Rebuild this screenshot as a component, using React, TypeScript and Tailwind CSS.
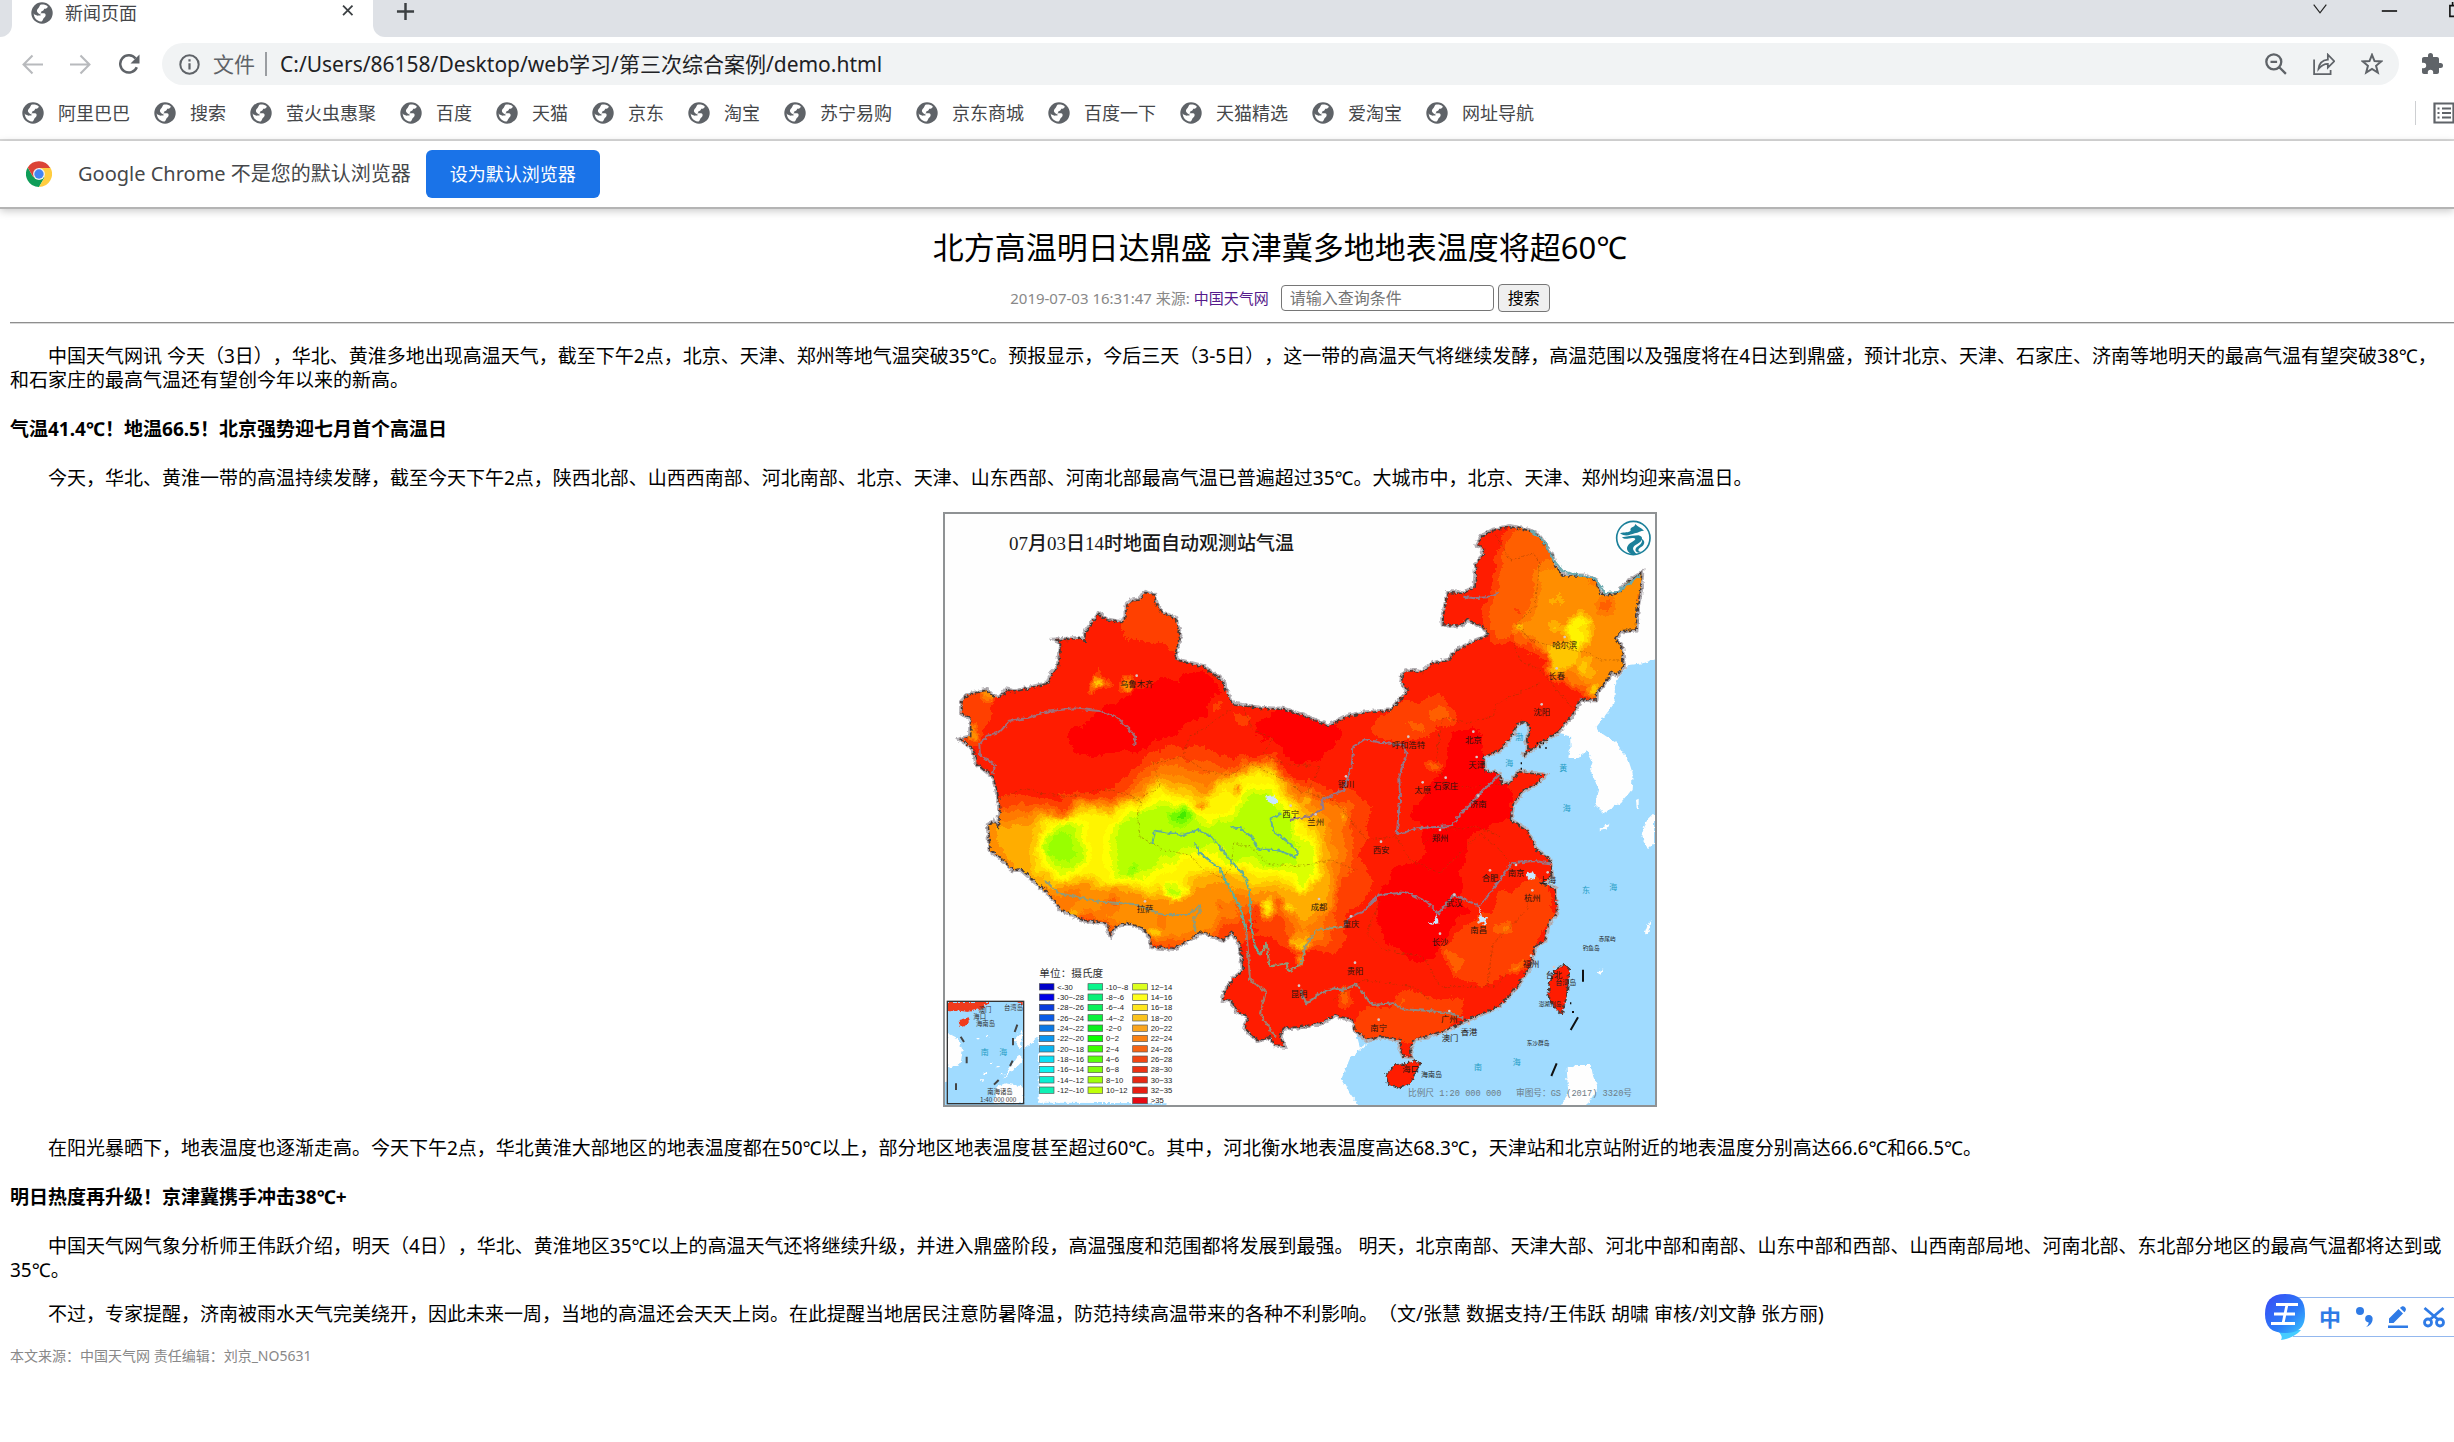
import React from "react";

const FONT =
  "font-['Noto_Sans','Noto_Sans_CJK_SC',sans-serif] [text-spacing-trim:space-all]";

/* ---------- small drawings ---------- */

function Globe() {
  return (
    <svg viewBox="0 0 22 22" className="size-[22px] shrink-0" aria-hidden="true">
      <circle cx="11" cy="11" r="10.7" fill="#5f6368" />
      <path
        fill="#fff"
        d="M9.4 2.8C12.2 2.2 14.8 2.8 16.8 4.4C16.6 6 15.2 6.8 13.2 6.8C12.8 8.2 12 9 10.4 9.200C10.400 10.400 10 11 8.800 11.200L13 11.200C14.400 11.400 14.800 12.400 14.600 13.600C14.200 15.400 12.600 16 12 17.400C11.600 18.600 11 19.400 9.800 19.500C5.600 18.900 2.600 15.400 2.700 11L7 13.400C8.400 13.900 9.600 13.500 9.800 12.700L7.600 11.400C5.600 10.200 5.400 8.200 6.800 6.800C8 5.800 8.400 4.200 9.400 2.800Z"
      />
      <path fill="#5f6368" d="M2.400 9.800C4.400 10 6 11.400 7.600 12.600L6.600 13.800L2.500 12Z" />
    </svg>
  );
}

function ChromeLogo() {
  return (
    <svg viewBox="0 0 48 48" className="size-[26px] shrink-0" aria-hidden="true">
      <path fill="#0f9d58" d="M24 24 13.6 30 3.2 12A24 24 0 0 0 24 48L34.4 30z" />
      <path fill="#ffcd40" d="M24 12H44.8A24 24 0 0 1 24 48L34.4 30z" />
      <path fill="#db4437" d="M24 13H44.8A24 24 0 0 0 3.2 12L13.6 30z" />
      <circle cx="24" cy="24" r="11" fill="#f1f1f1" />
      <circle cx="24" cy="24" r="8.6" fill="#4285f4" />
    </svg>
  );
}

function Stroke({ d, color = "#5f6368", w = 2, size = "size-[20px]" }: { d: string; color?: string; w?: number; size?: string }) {
  return (
    <svg viewBox="0 0 20 20" className={size + " shrink-0"} fill="none" stroke={color} strokeWidth={w} aria-hidden="true">
      <path d={d} />
    </svg>
  );
}

/* ---------- temperature map ---------- */

const pts = (dx: number, dy: number, s: string) =>
  s
    .trim()
    .split(/\s+/)
    .map((p) => {
      const [x, y] = p.split(",").map(Number);
      return `${x + dx},${y + dy}`;
    })
    .join(" ");
const nw = (s: string) => pts(0, 0, s);
const ne = (s: string) => pts(1110, 0, s);
const sw = (s: string) => pts(0, 900, s);
const se = (s: string) => pts(1110, 900, s);

const OUTLINE = [
  nw("205,890 190,830 140,790 135,765 128,745 92,718 122,710 122,655 95,640 95,605 115,585 170,570 190,590 215,590 230,570 255,575 355,550 365,520 385,500 392,430 378,420 450,415 465,425 465,400 505,342 525,358 575,368 588,350 588,318 605,303 630,300 645,278 672,285 680,315 695,338 735,355 750,405 735,465 740,480 820,500 880,545 890,580 908,612 990,625 1060,628 1100,640"),
  ne("30,655 85,678 140,650 185,640 270,632 300,600 325,572 305,545 308,520 330,512 365,518 400,490 450,480 465,455 520,425 568,405 550,380 500,358 485,375 430,375 428,355 445,278 490,280 525,262 530,190 550,165 550,145 532,133 545,110 580,90 630,80 690,92 720,110 755,165 765,200 790,228 850,228 885,240 900,280 920,288 955,280 985,245 1025,220 1022,270 1012,320 1008,390 965,392 945,415 965,440 970,500 950,525 935,515 915,550 890,575 888,600 840,598 820,640 775,695 735,720 700,745 670,768 685,745 680,720 693,690 678,662 650,672 640,700 600,750 550,770 555,815 598,820 605,850 630,850 655,815 735,825 710,850 670,870 640,910 630,960"),
  se("680,90 710,150 750,180 755,230 725,250 765,265 770,340 745,370 735,420 705,440 690,500 650,560 595,620 500,660 440,690 390,705 340,720 330,745 335,770 310,768 300,745 305,720 245,710 200,718 165,690 160,660 105,645 60,670 0,680"),
  sw("1060,685 1050,710 1062,738 1035,735 1020,710 985,722 960,700 945,685 955,650 920,632 905,600 880,600 885,575 915,530 940,510 935,470 930,435 905,395 880,420 815,395 760,430 735,445 665,440 660,410 640,385 590,368 555,380 542,405 530,370 460,360 430,345 395,330 355,280 270,205 250,212 225,185 180,150 175,75 192,65 205,80 210,30"),
].join(" ");
const HAINAN = se("258,825 285,795 325,790 340,782 362,790 345,820 330,850 300,865 265,855");
const TAIWAN = se("790,495 808,500 805,540 800,590 785,645 762,620 745,590 748,550 765,510");

/* level 0 is the coolest field, 15 the hottest */
const g = (n: number) => `rgb(${n * 16 + 8},${n * 16 + 8},${n * 16 + 8})`;

const WIDE: [number, string][] = [
  [15, nw("420,690 620,570 760,520 860,540 880,620 740,700 600,760 430,750")],
  [15, nw("960,680 1100,620 1230,660 1230,760 1100,790")],
  [13, nw("560,280 680,260 780,400 750,480 680,430 560,410")],
  [13, nw("80,560 195,560 170,660 130,760 60,740")],
  [13, nw("150,900 420,900 560,860 680,740 800,735 920,770 1010,790 1150,850 1330,900 1290,1080 1330,1160 1260,1260 1210,1380 1050,1345 980,1300 960,1330 900,1360 100,1400 100,900")],
  [11, nw("150,935 400,925 560,900 680,780 900,810 1000,800 1110,860 1270,920 1250,1080 1220,1200 1190,1340 1120,1320 1020,1230 920,1200 860,1200 760,1320 500,1250 400,1230 100,1300")],
  [9, nw("170,970 380,940 560,920 700,830 860,860 960,800 1080,880 1190,960 1210,1080 1190,1240 1130,1280 1050,1200 880,1150 740,1200 560,1160 400,1170 300,1160 190,1040")],
  [6, nw("310,1120 335,970 460,930 620,900 690,865 820,895 900,820 1000,790 1070,860 1090,960 1160,1000 1180,1110 1090,1160 960,1140 860,1100 780,1120 740,1200 650,1170 540,1165 480,1130 400,1140")],
  [3, nw("530,1130 550,975 620,930 720,900 790,955 880,960 940,900 1010,860 1070,900 1100,990 1165,1060 1145,1115 1040,1110 930,1095 820,1050 720,1080 640,1150")],
  [3, nw("335,1060 360,970 430,960 475,1040 430,1120 360,1120")],
  [10, nw("430,1200 480,1150 700,1180 800,1190 860,1140 940,1190 900,1260 800,1320 680,1320 440,1230")],
  [14, nw("940,1360 1060,1350 1160,1330 1240,1440 1200,1640 900,1640")],
  [15, ne("430,800 450,690 540,690 580,800 640,880 620,960 520,990 490,1100 430,1180 350,1160 380,1060 340,920")],
  [15, ne("-40,650 60,690 40,760 -60,780")],
  [15, se("320,200 430,160 500,230 480,300 560,380 430,470 330,480 250,420 230,300 280,230")],
  [13, ne("190,700 300,600 440,580 470,650 380,720 250,720")],
  [13, se("440,400 560,340 700,220 770,330 700,460 560,570 450,520")],
  [13, se("160,640 420,580 520,620 400,720 160,720")],
  [12, ne("590,440 560,330 590,200 640,60 740,80 1050,200 1050,420 960,600 830,560 750,470 650,410")],
  [10, ne("705,320 720,180 900,240 1050,190 1050,420 980,570 880,590 800,530 730,480 650,400")],
];

const FINE: [number, number, number, number, number][] = [
  [1, 755, 955, 36, 34], [0, 757, 955, 16, 16], [2, 400, 1045, 40, 50], [1, 612, 1116, 16, 20], [3, 735, 1168, 26, 24],
  [6, 500, 540, 15, 20], [7, 590, 560, 16, 14], [8, 168, 580, 18, 14], [9, 130, 705, 14, 30],
  [12, 825, 905, 14, 15], [12, 918, 865, 14, 18], [11, 875, 1212, 18, 20], [14, 965, 1220, 14, 16], [14, 975, 1270, 20, 26],
  [12, 543, 1216, 28, 18], [12, 690, 1270, 18, 12], [6, 665, 1290, 12, 14], [6, 1080, 1222, 14, 16], [6, 1112, 1320, 12, 26],
  [13, 1040, 1222, 14, 18], [6, 1010, 1225, 20, 28], [13, 880, 1220, 12, 14], [6, 430, 1240, 20, 10],
  [6, 1945, 400, 36, 54], [8, 1900, 470, 54, 34], [7, 1972, 505, 14, 24], [4, 1990, 575, 12, 10], [7, 1772, 390, 14, 18],
  [12, 2025, 320, 26, 22], [13, 1760, 330, 12, 18], [9, 1876, 300, 12, 24], [7, 1878, 374, 10, 14],
  [12, 1465, 685, 30, 18], [12, 1530, 650, 40, 26], [9, 1510, 795, 8, 14], [8, 1125, 890, 16, 16], [7, 1245, 960, 14, 12],
  [11, 1724, 1285, 18, 22], [10, 1752, 1392, 14, 14], [11, 1575, 1390, 10, 28], [12, 1720, 1190, 12, 10], [9, 1130, 1250, 14, 16],
  [4, 1120, 1100, 34, 60], [6, 1110, 1380, 10, 14], [12, 1250, 1490, 20, 24], [12, 1420, 1500, 14, 20], [12, 1560, 1360, 12, 18],
  [15, 470, 720, 60, 40], [13, 870, 610, 18, 26], [14, 870, 710, 40, 36], [12, 930, 660, 14, 16], [11, 1215, 950, 30, 20],
];

const RIVERS: [string, string][] = [
  ["#a0707c", nw("190,822 195,795 150,765 148,735 170,708 210,695 240,662 290,655 350,635 430,625 500,632 560,650 600,690 615,710 613,735")],
  ["#94788a", ne("-30,960 40,945 70,925 65,900 130,870 155,800 160,740 195,717 240,728 310,735 320,760 298,830 300,900 290,1005 350,985 455,978 475,950 530,890 598,825")],
  ["#5fae9c", sw("1055,40 1022,55 1030,95 1080,130 1103,155 1095,170 1040,150 985,148 965,110 930,85 900,82")],
  ["#5fae9c", sw("667,130 675,92 760,105 805,88 850,115 910,190 945,230 960,280 962,370 975,440 990,465")],
  ["#8f9c7c", sw("990,465 1010,430 1018,500 1070,490 1075,515 1115,490 1125,440 1160,390 1240,380")],
  ["#94788a", se("130,382 150,350 190,335 235,285 320,277 380,305 415,340 460,285 540,318 600,240 635,190 700,183 750,190")],
  ["#5fae9c", sw("795,130 810,160 870,205 890,250 930,320 950,400")],
  ["#a08070", sw("950,400 960,540 1008,575 990,640 1035,710")],
  ["#8f9c7c", sw("345,240 385,280 510,305 610,312 700,345 770,345 810,318 812,335 790,355 798,398")],
  ["#8f8a84", se("0,570 20,610 60,580 100,565 130,570 170,552 215,615 280,610 310,628 380,632 450,640 490,655")],
  ["#94788a", ne("490,290 520,295 560,292 595,278")],
  ["#6aa9ae", ne("690,92 730,120 760,180 790,215 885,235 915,280 955,275 1020,225")],
];

const BORDERS = [
  nw("220,890 290,865 330,880 420,890 520,868 600,885 635,905 622,945 630,1010 700,1050 780,1065 820,1110 880,1135 905,1100"),
  nw("635,890 690,860 670,790 760,770 830,815 900,825 960,790 1060,840 1120,880"),
  nw("760,760 780,710 830,680 905,625"), nw("940,625 970,690 1030,715 1000,760 1060,790 1140,800"),
  nw("905,1100 910,1030 960,1040 1010,1090 1100,1100 1200,1080 1280,1110"),
  ne("585,100 630,180 700,160 720,190 705,320 650,370 690,420 760,440 870,460 900,480 965,480"),
  ne("640,430 660,480 720,510 830,640"), ne("410,750 430,650 500,670 580,650 590,610 720,550"),
  ne("0,790 60,800 20,880 100,900 170,980"), ne("420,690 410,780 440,860 530,860 620,850"),
  se("150,60 200,120 290,110 330,180 420,220 540,100 600,150 640,200"), se("240,300 200,400 250,450 370,470 420,560 590,560 620,520"),
  se("370,130 420,90 530,80 600,110"), se("560,560 580,430 680,330 690,280"), se("100,600 190,540 340,560 390,600"),
];

const CITIES: [string, number, number][] = [
  ["乌鲁木齐", 620, 560], ["哈尔滨", 1904, 444], ["长春", 1880, 538], ["沈阳", 1835, 646], ["呼和浩特", 1435, 743], ["北京", 1630, 728],
  ["天津", 1640, 804], ["太原", 1478, 880], ["石家庄", 1547, 866], ["济南", 1645, 920], ["银川", 1248, 862], ["兰州", 1157, 976],
  ["西宁", 1082, 950], ["西安", 1353, 1058], ["郑州", 1530, 1023], ["成都", 1167, 1230], ["重庆", 1263, 1282], ["武汉", 1573, 1217],
  ["合肥", 1680, 1144], ["南京", 1758, 1128], ["上海", 1853, 1150], ["杭州", 1807, 1204], ["南昌", 1646, 1300], ["长沙", 1530, 1334],
  ["福州", 1803, 1400], ["贵阳", 1275, 1421], ["昆明", 1107, 1490], ["南宁", 1346, 1592], ["广州", 1558, 1566], ["香港", 1617, 1604],
  ["澳门", 1560, 1624], ["海口", 1442, 1716], ["台北", 1872, 1434], ["拉萨", 645, 1237],
];

const SEAS: [string, number, number][] = [
  ["渤", 1768, 721], ["海", 1738, 797], ["黄", 1900, 812], ["海", 1910, 934], ["东", 1968, 1180], ["海", 2050, 1171], ["南", 1644, 1711], ["海", 1760, 1694],
];

const LEGEND: { x: number; rows: [string, string][] }[] = [
  { x: 328, rows: [["#0000c8", "<-30"], ["#0000e6", "-30~-28"], ["#0a3cdc", "-28~-26"], ["#0a5ae6", "-26~-24"], ["#0a78e6", "-24~-22"], ["#0a96f0", "-22~-20"], ["#0ab4f0", "-20~-18"], ["#0ae1f5", "-18~-16"], ["#0af5f0", "-16~-14"], ["#0af0d2", "-14~-12"], ["#0ff0b4", "-12~-10"]] },
  { x: 474, rows: [["#0af58c", "-10~-8"], ["#0af078", "-8~-6"], ["#0af05a", "-6~-4"], ["#0af03c", "-4~-2"], ["#0af01e", "-2~0"], ["#0aff00", "0~2"], ["#3cff00", "2~4"], ["#5aff0a", "4~6"], ["#82ff0a", "6~8"], ["#a0ff0a", "8~10"], ["#beff0a", "10~12"]] },
  { x: 608, rows: [["#dcff1e", "12~14"], ["#ffff1e", "14~16"], ["#ffe61e", "16~18"], ["#fac31e", "18~20"], ["#faa51e", "20~22"], ["#fa8214", "22~24"], ["#f56414", "24~26"], ["#f04614", "26~28"], ["#eb3214", "28~30"], ["#e62814", "30~33"], ["#e61e14", "32~35"], ["#e60a14", ">35"]] },
];

function WeatherMap() {
  const table = {
    r: ".27 .45 .6 .72 .86 1 1 1 1 1 1 1 1 1 1 1",
    g: ".92 .98 1 1 1 1 .96 .88 .78 .68 .56 .48 .37 .25 .12 .02",
  };
  return (
    <svg viewBox="39 36 2142 1785" role="img" aria-label="07月03日14时地面自动观测站气温" className="w-[714px] h-auto">
      <defs>
        <clipPath id="land">
          <polygon points={OUTLINE} />
          <polygon points={HAINAN} />
          <polygon points={TAIWAN} />
        </clipPath>
        <filter id="soft-wide" x="-10%" y="-10%" width="120%" height="120%" colorInterpolationFilters="sRGB">
          <feGaussianBlur stdDeviation="18" />
        </filter>
        <filter id="soft-fine" x="-10%" y="-10%" width="120%" height="120%" colorInterpolationFilters="sRGB">
          <feGaussianBlur stdDeviation="9" />
        </filter>
        <filter id="ramp" filterUnits="userSpaceOnUse" x="0" y="0" width="2220" height="1860" colorInterpolationFilters="sRGB">
          <feTurbulence type="fractalNoise" baseFrequency="0.014" numOctaves="3" seed="7" result="n" />
          <feDisplacementMap in="SourceGraphic" in2="n" scale="60" xChannelSelector="R" yChannelSelector="G" />
          <feComponentTransfer>
            <feFuncR type="discrete" tableValues={table.r} />
            <feFuncG type="discrete" tableValues={table.g} />
            <feFuncB type="discrete" tableValues="0" />
          </feComponentTransfer>
          <feGaussianBlur stdDeviation="2" />
        </filter>
        <filter id="rough" filterUnits="userSpaceOnUse" x="0" y="0" width="2220" height="1860">
          <feTurbulence type="fractalNoise" baseFrequency="0.09" numOctaves="2" seed="3" result="n" />
          <feDisplacementMap in="SourceGraphic" in2="n" scale="14" xChannelSelector="R" yChannelSelector="G" />
        </filter>
      </defs>
      <rect x="39" y="36" width="2142" height="1785" fill="#fefefe" />

      {/* sea */}
      <g filter="url(#rough)">
        <polygon
          fill="#a0dbff"
          points={
            ne("1072,475 1030,490 985,495 960,525 945,555 943,610 890,680 900,705 880,740 830,775 805,770 812,745 810,705 780,700 700,650 640,640 500,760 500,900") +
            " " +
            se("500,500 200,650 165,690 180,745 210,725 150,775 125,835 150,880 180,922 1072,922")
          }
        />
        <polygon fill="#fefefe" points={ne("890,690 950,730 985,780 998,820 995,870 960,910 910,940 885,915 895,865 870,810 878,785 860,750")} />
        <polygon fill="#fefefe" points={se("800,805 830,795 872,795 880,830 895,865 870,900 858,922 778,922 805,880")} />
        <polygon fill="#a0dbff" points={sw("39,850 285,745 326,712 326,908 710,910 708,922 39,922")} />
        <path fill="#fefefe" d="M2150 960l22-22v90l-18 20l-20-40zM2012 985l28-16l-6 14l-26 8zM2155 1270l8-10l-10 44l-8-6zM2002 1418l18-10l-8 16zM2118 900l8-4v28h-6z" />
      </g>

      {/* land */}
      <g filter="url(#rough)">
        <polygon points={OUTLINE} fill="none" stroke="#b4b0b4" strokeWidth="15" />
        <g clipPath="url(#land)">
          <g filter="url(#ramp)">
            <rect x="-40" y="-40" width="2300" height="1940" fill={g(14)} />
            <g filter="url(#soft-wide)">
              {WIDE.map(([n, p], i) => (
                <polygon key={i} points={p} fill={g(n)} />
              ))}
            </g>
            <g filter="url(#soft-fine)">
              {FINE.map(([n, cx, cy, rx, ry], i) => (
                <ellipse key={i} cx={cx} cy={cy} rx={rx} ry={ry} fill={g(n)} />
              ))}
            </g>
          </g>
        </g>
        <g fill="none" stroke="#4a3a36" strokeWidth="5" strokeDasharray="14 5">
          <polygon points={OUTLINE} />
          <polygon points={HAINAN} />
          <polygon points={TAIWAN} />
        </g>
        <g fill="none" stroke="#7a3a10" strokeOpacity=".6" strokeWidth="2" strokeDasharray="8 5">
          {BORDERS.map((p, i) => (
            <polyline key={i} points={p} />
          ))}
        </g>
        <g fill="none" strokeWidth="6" strokeLinejoin="round">
          {RIVERS.map(([c, p], i) => (
            <polyline key={i} points={p} stroke={c} />
          ))}
        </g>
        <path fill="#c8e8ff" d="M1008 888l24-2l12 20l-12 8l-20-10zM1790 1118l18-4l10 18l-14 8l-12-8zM1648 1220l8 30l18 4l-8 20l-18-12zM1490 1270l20-2l10-24l6 26l-20 4z" />
      </g>

      {/* place names */}
      <g fontFamily="'Noto Sans CJK SC', sans-serif" fontSize="25" fill="#2a1410" textAnchor="middle">
        {CITIES.map(([name, x, y]) => (
          <React.Fragment key={name}>
            <circle cx={x} cy={y - 33} r="4" fill="#d8c8c8" />
            <text x={x} y={y}>{name}</text>
          </React.Fragment>
        ))}
      </g>
      <g fontFamily="'Noto Sans CJK SC', sans-serif" fontSize="24" fill="#1f9cc4" textAnchor="middle">
        {SEAS.map(([name, x, y], i) => (
          <text key={i} x={x} y={y}>{name}</text>
        ))}
      </g>
      <g fontFamily="'Noto Sans CJK SC', sans-serif" fontSize="17" fill="#222">
        <text x="1958" y="1351">钓鱼岛</text>
        <text x="2006" y="1324">赤尾屿</text>
        <text x="1790" y="1634">东沙群岛</text>
        <text x="1826" y="1517">澎湖列岛</text>
        <text x="1876" y="1456" fontSize="21">台湾岛</text>
        <text x="1473" y="1732" fontSize="21">海南岛</text>
      </g>
      <g stroke="#111" strokeWidth="6">
        <path d="M1959 1409v36M1944 1552l-22 38M1880 1690l-16 38" />
        <path d="M1828 742h4M1838 730h4M1846 744h4M1820 730h4M1772 790h4M1772 806h4M1920 1510h4M1926 1536h6" />
      </g>

      {/* captions */}
      <g fontFamily="'Liberation Serif', 'Noto Sans CJK SC', serif" fill="#1a1a1a">
        <text x="237" y="149" fontSize="57" fontWeight="500">07月03日14时地面自动观测站气温</text>
        <text x="328" y="1430" fontSize="32" fill="#333">单位：摄氏度</text>
        <g fontSize="26" fill="#6d7c86" fontFamily="'Liberation Mono', 'Noto Sans CJK SC', monospace">
          <text x="1434" y="1788">比例尺 1:20 000 000</text>
          <text x="1758" y="1788">审图号：GS (2017) 3320号</text>
        </g>
      </g>

      {/* legend */}
      <g fontFamily="'Liberation Sans', sans-serif" fontSize="23" fill="#222">
        {LEGEND.map((col) =>
          col.rows.map(([c, label], i) => (
            <React.Fragment key={label}>
              <rect x={col.x} y={1451 + i * 31} width="44" height="19" fill={c} stroke="#555" strokeWidth="2" />
              <text x={col.x + 54} y={1469 + i * 31}>{label}</text>
            </React.Fragment>
          )),
        )}
      </g>

      {/* South China Sea inset */}
      <rect x="51" y="1504" width="230" height="307" fill="#a0dbff" />
      <g filter="url(#rough)">
        <path fill="#fefefe" d="M52 1598l30 16l16 36l-6 40l-40 16zM278 1680l-60 60l50-78zM278 1590l-26 30l20 30zM190 1810l10-50l26-10l54 10v50z" />
        <path fill="#f03a1c" d="M54 1506h126l-20 18l-46 12l-40-6l-20 6zM86 1560l30-8l4 12l-18 16l-14-4zM264 1506h14v8z" />
        <path stroke="#fefefe" strokeWidth="4" fill="none" d="M160 1720h8M180 1690h10M200 1700h6M140 1616h8M170 1610h6M150 1740h10M210 1724h10" />
      </g>
      <path stroke="#444" strokeWidth="6" fill="none" d="M92 1610l10 16M110 1670v20M78 1750v20M192 1754l14-14M240 1698l8-16M249 1614v22M254 1596l8-22" />
      <g fontFamily="'Noto Sans CJK SC', sans-serif" fontSize="19" fill="#333">
        <text x="222" y="1530">台湾岛</text>
        <text x="146" y="1536">澳门</text>
        <text x="130" y="1556">海口</text>
        <text x="138" y="1577">海南岛</text>
        <text x="172" y="1782">南海诸岛</text>
        <text x="150" y="1805">1:40 000 000</text>
        <text x="152" y="1664" fontSize="24" fill="#1f9cc4">南</text>
        <text x="208" y="1664" fontSize="24" fill="#1f9cc4">海</text>
      </g>
      <rect x="52" y="1504" width="229" height="307" fill="none" stroke="#333" strokeWidth="4" />

      {/* agency emblem */}
      <g transform="translate(2110 114)" stroke="#1b809a" fill="none">
        <circle r="50" strokeWidth="5" />
        <path fill="#1b809a" stroke="none" d="M-40-14C-24-20-18-14-8-22C-12-34 4-30 6-42C12-34 24-30 32-22C22-22 16-16 4-14C-8-10-24-2-40-14ZM-34-2C-14-6 2-8 16-8C32-4 28 10 12 18C-4 26-6 34 12 50L-4 50C-26 38-22 22-4 12C6 6 10 2 0 0C-12-2-24 8-34-2ZM24 2C38 8 34 22 22 28C10 36 16 42 24 42C14 48 2 40 8 30C14 22 32 16 24 2Z" />
      </g>
      <rect x="42" y="39" width="2136" height="1779" fill="none" stroke="#8f9294" strokeWidth="6" />
    </svg>
  );
}

/* ---------- browser chrome ---------- */

const BOOKMARKS = ["阿里巴巴", "搜索", "萤火虫惠聚", "百度", "天猫", "京东", "淘宝", "苏宁易购", "京东商城", "百度一下", "天猫精选", "爱淘宝", "网址导航"];

function TabStrip() {
  return (
    <div className="flex h-[37px] bg-white">
      <div className="w-3 shrink-0 rounded-br-xl bg-[#dee1e6]" />
      <div className="flex w-[361px] shrink-0 items-start gap-3 pl-[19px] pr-4 pt-0.5">
        <Globe />
        <span className="flex-1 text-[18px] leading-[22px] text-[#45474a]">新闻页面</span>
        <button aria-label="关闭标签页">
          <Stroke d="M4.5 4 15 14.5M15 4 4.5 14.5" color="#3c4043" size="size-[18px]" />
        </button>
      </div>
      <div className="flex flex-1 items-start rounded-bl-xl bg-[#dee1e6] pl-[23px] pt-0.5">
        <button aria-label="新标签页">
          <Stroke d="M10 1v18M1 10h18" color="#3c4043" w={2.6} size="size-[19px]" />
        </button>
        <div className="ml-auto flex items-start gap-[51px]">
          <button aria-label="搜索标签页"><Stroke d="M3 3l7 9 7-9" color="#222" w={1.3} size="size-[18px]" /></button>
          <button aria-label="最小化"><Stroke d="M2 10h17" color="#111" w={1.8} size="size-[18px]" /></button>
          <button aria-label="还原" className="w-[5px] overflow-hidden"><Stroke d="M1 4h14v12H1zM4 4v-4" color="#111" w={1.8} size="size-[18px]" /></button>
        </div>
      </div>
    </div>
  );
}

function Toolbar() {
  return (
    <div className="flex h-[54px] items-center pl-[22px] pr-[10px]">
      <button aria-label="后退"><Stroke d="M20 10H2M10 1.5 1.5 10 10 18.5" color="#b8babd" size="size-[21px]" /></button>
      <button aria-label="前进" className="ml-[27px]"><Stroke d="M0 10h18M10 1.5 18.5 10 10 18.5" color="#b8babd" size="size-[21px]" /></button>
      <button aria-label="重新加载" className="ml-7">
        <svg viewBox="0 0 21 21" className="size-[21px]" aria-hidden="true">
          <path fill="none" stroke="#5f6368" strokeWidth="2.5" d="M17.8 13.2A8.6 8.6 0 1 1 16.6 4.6" />
          <path fill="#5f6368" d="M20.5.5v9h-9z" />
        </svg>
      </button>
      <div className="ml-[22px] flex h-[42px] flex-1 items-center rounded-full bg-[#f1f3f4] pl-[17px] pr-4">
        <svg viewBox="0 0 21 21" className="size-[21px] shrink-0" aria-hidden="true">
          <circle cx="10.5" cy="10.5" r="9.2" fill="none" stroke="#5f6368" strokeWidth="2" />
          <path stroke="#5f6368" strokeWidth="2.2" d="M10.5 9.2v6.3M10.5 5.2v2.3" />
        </svg>
        <span className="ml-[13px] text-[21px] leading-7 text-[#5f6368]">文件</span>
        <span className="ml-[10px] h-6 w-0.5 bg-[#9a9da1]" />
        <input
          aria-label="地址栏"
          defaultValue="C:/Users/86158/Desktop/web学习/第三次综合案例/demo.html"
          className="ml-[13px] h-8 min-w-0 flex-1 bg-transparent pb-0.5 text-[21px] text-[#202124] outline-none"
        />
        <div className="flex items-center gap-[26px]">
          <button aria-label="缩放"><Stroke d="M8 1.2a6.8 6.8 0 1 0 0 13.6a6.8 6.8 0 1 0 0-13.6M13 13l6 6M5 8h6" w={2.1} size="size-[22px]" /></button>
          <button aria-label="分享"><Stroke d="M1 6v13.2h15V15.5M5 14.5C5.5 9.5 9 6.5 13.5 6V1.5L19.3 7.5 13.5 13.3V9.8C10 9.8 7.5 11.2 5 14.5Z" w={1.6} size="size-[22px]" /></button>
          <button aria-label="收藏"><Stroke d="M10 1.600L12.300 7.300 18.400 7.700 13.700 11.600 15.300 17.700 10 14.400 4.700 17.700 6.300 11.600 1.600 7.700 7.700 7.300Z" w={1.8} size="size-[22px]" /></button>
        </div>
      </div>
      <button aria-label="扩展程序" className="ml-[21px]">
        <svg viewBox="0 0 24 24" className="size-6" fill="#5f6368" aria-hidden="true">
          <path d="M20.5 11H19V7c0-1.1-.9-2-2-2h-4V3.500a2.500 2.500 0 0 0-5 0V5H4c-1.100 0-2 .9-2 2v3.800h1.500a2.700 2.700 0 0 1 0 5.400H2V20c0 1.100.9 2 2 2h3.800v-1.500a2.700 2.700 0 0 1 5.400 0V22H17c1.100 0 2-.9 2-2v-4h1.500a2.500 2.500 0 0 0 0-5z" />
        </svg>
      </button>
    </div>
  );
}

function BookmarkBar() {
  return (
    <nav className="flex h-[50px] items-center overflow-hidden whitespace-nowrap border-b-2 border-[#dadada] pb-1 pl-[22px]">
      <div className="flex gap-6">
        {BOOKMARKS.map((b) => (
          <a key={b} href="#" className="flex items-center gap-[14px] text-[18px] leading-6 text-[#45474a]">
            <Globe />
            {b}
          </a>
        ))}
      </div>
      <span className="ml-auto h-6 w-px bg-[#cdcfd2]" />
      <button aria-label="阅读清单" className="ml-[17px] w-[21px] shrink-0">
        <svg viewBox="0 0 22 22" className="size-[22px]" fill="none" stroke="#5f6368" strokeWidth="2.200" aria-hidden="true">
          <path d="M1.500 1.500h19v19h-19zM4.500 6.500h2M9 6.500h9M4.500 11h2M9 11h9M4.500 15.500h2M9 15.500h9" />
        </svg>
      </button>
    </nav>
  );
}

function DefaultBrowserBar() {
  return (
    <div className="relative flex h-[68px] items-center border-b-2 border-[#b4b4b4] pl-[26px] shadow-[0_2px_8px_rgba(0,0,0,0.22)]">
      <ChromeLogo />
      <span className="ml-[26px] text-[20px] leading-7 text-[#45474a]">Google Chrome 不是您的默认浏览器</span>
      <button className="ml-[15px] h-12 rounded-md bg-[#1a73e8] px-6 text-[18px] leading-6 text-white">设为默认浏览器</button>
    </div>
  );
}

function InputMethodBar() {
  return (
    <div className="fixed right-0 top-[1294px] flex h-[46px] items-center">
      <svg viewBox="0 0 40 46" className="relative z-10 -mr-3 h-[46px] w-10" aria-hidden="true">
        <defs>
          <linearGradient id="ime" x1="0" y1="0" x2="1" y2="1">
            <stop offset="0" stopColor="#3a48f5" />
            <stop offset=".6" stopColor="#2b7cf8" />
            <stop offset="1" stopColor="#3cc8ff" />
          </linearGradient>
        </defs>
        <path fill="#46ccff" d="M12 36h24c-4 5-12 9-20 10c2-3 0-6-4-10z" />
        <path fill="url(#ime)" d="M20 0C34 0 40 6 40 20S33 39 20 39S0 33 0 20S6 0 20 0z" />
        <path fill="none" stroke="#fff" strokeWidth="2.800" d="M11 10.500h22M9 20h21M6 29.500h24M22 10.500l-4 19" />
      </svg>
      <div className="flex h-10 items-center gap-[14px] border-y border-[#94b8ee] bg-white pl-[26px] pr-[9px]">
        <span className="text-[22px] font-bold leading-6 text-[#2f7be6]">中</span>
        <svg viewBox="0 0 18 22" className="h-[22px] w-[18px]" fill="#2f7be6" aria-hidden="true">
          <circle cx="5" cy="5" r="4" />
          <path d="M14 9a3.600 3.600 0 0 1 3.600 4c0 4-3 7-6.600 8c1.800-1.400 2.600-3 2.700-4.600A3.700 3.700 0 0 1 14 9z" />
        </svg>
        <svg viewBox="0 0 22 22" className="size-[22px]" fill="#2f7be6" aria-hidden="true">
          <path d="M1 19.500h20V22H1zM2 12.500 11.500 3l4.500 4.500L6.500 17H2zM13 2c1.600-2 3.600-2.200 5-.8s1.200 3.600-.6 5z" />
        </svg>
        <svg viewBox="0 0 22 22" className="size-[22px]" fill="none" stroke="#2f7be6" strokeWidth="2.800" aria-hidden="true">
          <path d="M1.500 2 15 13.500M20.500 2 7 13.500" />
          <circle cx="5" cy="16.500" r="3.500" />
          <circle cx="17" cy="16.500" r="3.500" />
        </svg>
      </div>
    </div>
  );
}

/* ---------- article ---------- */

const para = "indent-[2em] text-[19px] leading-6";
const heading = "text-[19px] font-bold leading-6";

function Article() {
  return (
    <article className="w-[calc(100%+106px)] px-[10px] pb-6 pt-[15px] text-black">
      <header className="flex flex-col items-center">
        <h1 className="text-[31px] leading-[46px]">北方高温明日达鼎盛 京津冀多地地表温度将超60℃</h1>
        <form className="mt-[13px] flex h-[30px] items-center" onSubmit={(e) => e.preventDefault()}>
          <span className="text-[15px] leading-5 text-[#888]">
            2019-07-03 16:31:47 来源: <a href="#" className="text-[#551a8b]">中国天气网</a>
          </span>
          <input
            aria-label="查询条件"
            placeholder="请输入查询条件"
            className="ml-3 h-[26px] w-[213px] rounded-sm border border-[#767676] px-2 text-[16px] placeholder:text-[#757575]"
          />
          <button className="ml-1 h-7 w-[52px] rounded-sm border border-[#767676] bg-[#efefef] text-[16px] leading-6">搜索</button>
        </form>
      </header>
      <hr className="mt-[9px] border-t border-b border-t-[#8e8e8e] border-b-[#d8d8d8]" />
      <p className={para + " mt-5"}>
        中国天气网讯 今天（3日），华北、黄淮多地出现高温天气，截至下午2点，北京、天津、郑州等地气温突破35℃。预报显示，今后三天（3-5日），这一带的高温天气将继续发酵，高温范围以及强度将在4日达到鼎盛，预计北京、天津、石家庄、济南等地明天的最高气温有望突破38℃，
        <br />
        和石家庄的最高气温还有望创今年以来的新高。
      </p>
      <h4 className={heading + " mt-[25px]"}>气温41.4℃！地温66.5！北京强势迎七月首个高温日</h4>
      <p className={para + " mt-[25px]"}>
        今天，华北、黄淮一带的高温持续发酵，截至今天下午2点，陕西北部、山西西南部、河北南部、北京、天津、山东西部、河南北部最高气温已普遍超过35℃。大城市中，北京、天津、郑州均迎来高温日。
      </p>
      <div className="mt-[22px] flex justify-center pl-10">
        <WeatherMap />
      </div>
      <p className={para + " mt-[29px]"}>
        在阳光暴晒下，地表温度也逐渐走高。今天下午2点，华北黄淮大部地区的地表温度都在50℃以上，部分地区地表温度甚至超过60℃。其中，河北衡水地表温度高达68.3℃，天津站和北京站附近的地表温度分别高达66.6℃和66.5℃。
      </p>
      <h4 className={heading + " mt-[25px]"}>明日热度再升级！京津冀携手冲击38℃+</h4>
      <p className={para + " mt-[25px]"}>
        中国天气网气象分析师王伟跃介绍，明天（4日），华北、黄淮地区35℃以上的高温天气还将继续升级，并进入鼎盛阶段，高温强度和范围都将发展到最强。 明天，北京南部、天津大部、河北中部和南部、山东中部和西部、山西南部局地、河南北部、东北部分地区的最高气温都将达到或
        <br />
        35℃。
      </p>
      <p className={para + " mt-5"}>
        不过，专家提醒，济南被雨水天气完美绕开，因此未来一周，当地的高温还会天天上岗。在此提醒当地居民注意防暑降温，防范持续高温带来的各种不利影响。（文/张慧 数据支持/王伟跃 胡啸 审核/刘文静 张方丽)
      </p>
      <footer className="mt-5 text-[14px] leading-5 text-[#888]">本文来源：中国天气网 责任编辑：刘京_NO5631</footer>
    </article>
  );
}

export default function App() {
  return (
    <div className={FONT + " min-h-screen overflow-x-hidden bg-white"}>
      <TabStrip />
      <Toolbar />
      <BookmarkBar />
      <DefaultBrowserBar />
      <Article />
      <InputMethodBar />
    </div>
  );
}
